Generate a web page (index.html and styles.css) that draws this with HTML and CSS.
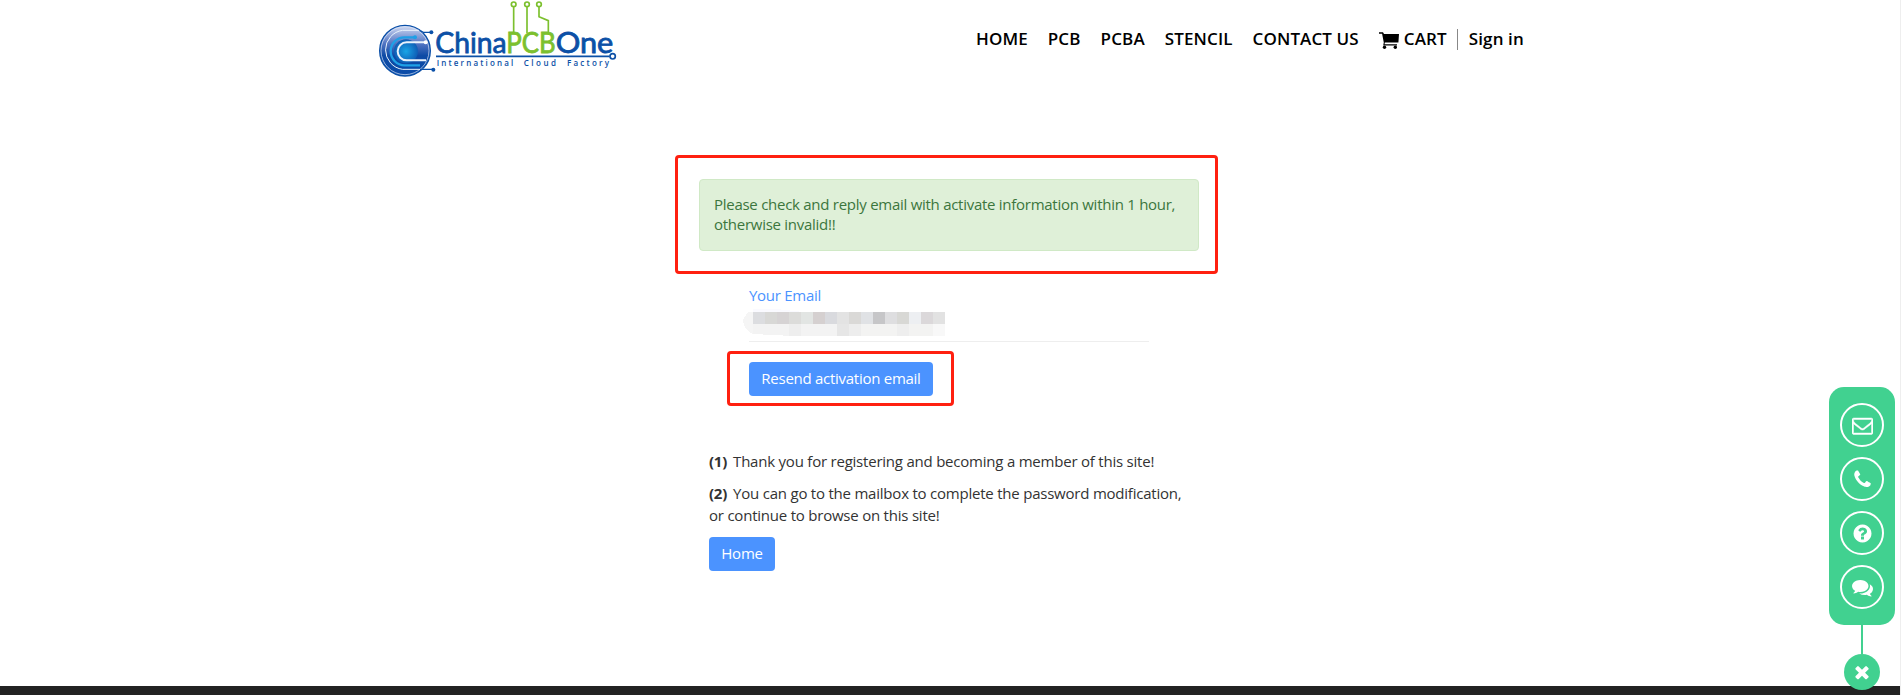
FILE: index.html
```html
<!DOCTYPE html>
<html lang="en">
<head>
<meta charset="utf-8">
<title>ChinaPCBOne</title>
<link rel="stylesheet" href="styles.css">
</head>
<body>
<div class="page">
  <header class="header">
    <svg class="logo" viewBox="0 0 780 255" role="img" aria-label="ChinaPCBOne">
      <defs>
        <radialGradient id="core"><stop offset="0" stop-color="#19a5e6"/><stop offset="1" stop-color="#0e5db5"/></radialGradient>
        <linearGradient id="ball" x1="0" y1="0" x2="0" y2="1"><stop offset="0" stop-color="#d3dcf3"/><stop offset=".35" stop-color="#5577c4"/><stop offset=".6" stop-color="#0d4aa5"/><stop offset="1" stop-color="#0a4ba8"/></linearGradient>
      </defs>
      <circle cx="105" cy="152" r="76" fill="url(#ball)" stroke="#0b50a8" stroke-width="4"/>
      <circle cx="105" cy="152" r="72" fill="none" stroke="#dce6f7" stroke-width="2"/>
      <circle cx="108" cy="154" r="36" fill="url(#core)"/>
      <path d="M133 112H104a41 41 0 0 0 0 84H150" fill="none" stroke="#1fa0e6" stroke-width="7"/>
      <path d="M165 127H110a27 27 0 0 0 0 54H168" fill="none" stroke="#e8f2fc" stroke-width="6"/>
      <path d="M186 97H160L146 91H98A59 59 0 0 0 98 208H188" fill="none" stroke="#e8f2fc" stroke-width="3"/>
      <path d="M186 97H160L148 91M150 208H188" fill="none" stroke="#0b50a8" stroke-width="4"/>
      <circle cx="135" cy="112" r="6" fill="#1fa0e6"/><circle cx="167" cy="127" r="6" fill="#fff"/>
      <circle cx="184" cy="97" r="6" fill="#0b50a8"/><circle cx="190" cy="209" r="6" fill="#0b50a8"/>
      <g fill="none" stroke="#7cc02e" stroke-width="5">
        <path d="M431 20V100M471 20V100M507 20V50L535 62V100"/>
        <circle cx="431" cy="13" r="7"/><circle cx="471" cy="13" r="7"/><circle cx="507" cy="13" r="7"/>
      </g>
      <g class="logo-name">
        <text class="blue" x="196" y="158" textLength="214" lengthAdjust="spacingAndGlyphs">China</text>
        <text class="green" x="409" y="158" textLength="148" lengthAdjust="spacingAndGlyphs">PCB</text>
        <text class="blue" x="557" y="158" textLength="173" lengthAdjust="spacingAndGlyphs">One</text>
      </g>
      <path d="M198 169H719" stroke="#0c50a6" stroke-width="5"/>
      <circle cx="728" cy="169" r="8" fill="#fff" stroke="#0c50a6" stroke-width="5"/>
      <g class="logo-tag">
        <text x="200" y="198" textLength="230">International</text>
        <text x="461" y="198" textLength="97">Cloud</text>
        <text x="591" y="198" textLength="126">Factory</text>
      </g>
    </svg>
    <nav class="nav">
      <a>HOME</a><a>PCB</a><a>PCBA</a><a>STENCIL</a><a>CONTACT US</a>
      <a class="cart"><svg class="cart-icon" viewBox="0 0 20 17"><path d="M0 .3H4L5 2H20L19.4 10.4H5.8L5.6 12.3H18V13.5H4.2L4.8 10.6L3.1 1.7H0Z"/><circle cx="5.5" cy="15.2" r="1.7"/><circle cx="16.3" cy="15.2" r="1.7"/></svg>CART</a>
      <a class="signin">Sign in</a>
    </nav>
  </header>

  <main class="content">
    <section class="notice-frame">
      <div class="notice">Please check and reply email with activate information within 1 hour,<br>otherwise invalid!!</div>
    </section>
    <section class="form">
      <label class="label">Your Email</label>
      <div class="field">
        <svg class="masked" viewBox="0 0 203 27" shape-rendering="crispEdges">
          <path d="M10 3H6Q1 7 0 12Q1 21 10 25Z" fill="#f5f5f5"/>
          <path d="M10 0H34L60 3H10Z" fill="#fafaff"/>
          <g><rect x="10" y="3" width="12" height="12" fill="#dcdde0"/><rect x="22" y="3" width="12" height="12" fill="#d8d8d6"/><rect x="34" y="3" width="12" height="12" fill="#d6d3d4"/><rect x="46" y="3" width="12" height="12" fill="#dcdcda"/><rect x="58" y="3" width="12" height="12" fill="#e2e5e3"/><rect x="70" y="3" width="12" height="12" fill="#d5d0d0"/><rect x="82" y="3" width="12" height="12" fill="#d9dade"/><rect x="94" y="3" width="12" height="12" fill="#e3e3e3"/><rect x="106" y="3" width="12" height="12" fill="#dad9d7"/><rect x="118" y="3" width="12" height="12" fill="#e0e2e5"/><rect x="130" y="3" width="12" height="12" fill="#c6c6c8"/><rect x="142" y="3" width="12" height="12" fill="#dedee0"/><rect x="154" y="3" width="12" height="12" fill="#d8d8d5"/><rect x="166" y="3" width="12" height="12" fill="#edeff2"/><rect x="178" y="3" width="12" height="12" fill="#dbd8da"/><rect x="190" y="3" width="12" height="12" fill="#e2e2e2"/></g>
          <g><path d="M10 15H94V27H50L10 25Z" fill="#f3f3f3"/><rect x="46" y="15" width="12" height="12" fill="#eeeeee"/><rect x="94" y="15" width="12" height="12" fill="#e6e6e6"/><rect x="106" y="15" width="12" height="12" fill="#ededed"/><rect x="118" y="15" width="72" height="12" fill="#f3f3f2"/><rect x="154" y="15" width="12" height="12" fill="#eeeeee"/><rect x="190" y="15" width="12" height="12" fill="#f8f8f8"/></g>
        </svg>
      </div>
      <div class="resend-frame"><button class="btn resend">Resend activation email</button></div>
    </section>
    <section class="info">
      <p class="one"><b>(1)</b><span>Thank you for registering and becoming a member of this site!</span></p>
      <p class="two"><b>(2)</b><span>You can go to the mailbox to complete the password modification,</span></p>
      <p class="three">or continue to browse on this site!</p>
      <button class="btn home">Home</button>
    </section>
  </main>
  <footer class="footer"></footer>

  <aside class="contact">
    <div class="panel">
      <a class="round"><svg viewBox="0 0 1792 1792"><path d="M1664 1504v-768q-32 36-69 66-268 206-426 338-51 43-83 67t-86.5 48.5-102.5 24.5h-2q-48 0-102.5-24.5t-86.5-48.5-83-67q-158-132-426-338-37-30-69-66v768q0 13 9.5 22.5t22.5 9.5h1472q13 0 22.5-9.5t9.5-22.5zm0-1051v-24.5l-.5-13-3-12.5-5.5-9-9-7.5-14-2.5h-1472q-13 0-22.5 9.5t-9.5 22.5q0 168 147 284 193 152 401 317 6 5 35 29.5t46 37.5 44.5 31.5 50.5 27.5 43 9h2q20 0 43-9t50.5-27.5 44.5-31.5 46-37.5 35-29.5q208-165 401-317 54-43 100.5-115.5t46.5-131.5zm128-37v1088q0 66-47 113t-113 47h-1472q-66 0-113-47t-47-113v-1088q0-66 47-113t113-47h1472q66 0 113 47t47 113z" stroke="#fff" stroke-width="40"/></svg></a>
      <a class="round"><svg viewBox="0 0 1792 1792"><path d="M1600 1240q0 27-10 70.5t-21 68.5q-21 50-122 106-94 51-186 51-27 0-53-3.5t-57.5-12.5-47-14.5-55.5-20.5-49-18q-98-35-175-83-127-79-264-216t-216-264q-48-77-83-175-3-9-18-49t-20.5-55.5-14.5-47-12.5-57.5-3.5-53q0-92 51-186 56-101 106-122 25-11 68.5-21t70.5-10q14 0 21 3 18 6 53 76 11 19 30 54t35 63.5 31 53.5q3 4 17.5 25t21.5 35.5 7 28.5q0 20-28.5 50t-62 55-62 53-28.5 46q0 9 5 22.5t8.5 20.5 14 24 11.5 19q76 137 174 235t235 174q2 1 19 11.5t24 14 20.5 8.5 22.5 5q18 0 46-28.5t53-62 55-62 50-28.5q14 0 28.5 7t35.5 21.5 25 17.5q25 15 53.5 31t63.5 35 54 30q70 35 76 53 3 7 3 21z"/></svg></a>
      <a class="round"><svg viewBox="0 0 1792 1792"><path d="M1024 1376v-192q0-14-9-23t-23-9h-192q-14 0-23 9t-9 23v192q0 14 9 23t23 9h192q14 0 23-9t9-23zm256-672q0-88-55.5-163t-138.5-116-170-41q-243 0-371 213-15 24 8 42l132 100q7 6 19 6 16 0 25-12 53-68 86-92 34-24 86-24 48 0 85.5 26t37.5 59q0 38-20 61t-68 45q-63 28-115.5 86.5t-52.5 125.5v36q0 14 9 23t23 9h192q14 0 23-9t9-23q0-19 21.5-49.5t54.5-49.5q32-18 49-28.5t46-35 44.5-48 28-60.5 12.5-81zm384 192q0 209-103 385.5t-279.5 279.5-385.5 103-385.5-103-279.5-279.5-103-385.5 103-385.5 279.5-279.5 385.5-103 385.5 103 279.5 279.5 103 385.5z"/></svg></a>
      <a class="round"><svg viewBox="0 0 1792 1792"><path d="M1408 768q0 139-94 257t-256.5 186.5-353.5 68.5q-86 0-176-16-124 88-278 128-36 9-86 16h-3q-11 0-20.5-8t-11.5-21q-1-3-1-6.5t.5-6.5 2-6l2.5-5 3.5-5.5 4-5 4.5-5 4-4.5q5-6 23-25t26-29.5 22.5-29 25-38.5 20.5-44q-124-72-195-177t-71-224q0-139 94-257t256.5-186.5 353.5-68.5 353.5 68.5 256.5 186.5 94 257zm384 256q0 120-71 224.5t-195 176.5q10 24 20.5 44t25 38.5 22.5 29 26 29.5 23 25q1 1 4 4.5t4.5 5 4 5 3.5 5.5l2.5 5 2 6 .5 6.5-1 6.5q-3 14-13 22t-22 7q-50-7-86-16-154-40-278-128-90 16-176 16-271 0-472-132 58 4 88 4 161 0 309-45t264-129q125-92 192-212t67-254q0-77-23-152 129 71 204 178t75 230z"/></svg></a>
    </div>
    <div class="stem"></div>
    <a class="close"><svg viewBox="0 0 1792 1792"><path d="M1490 1322q0 40-28 68l-136 136q-28 28-68 28t-68-28l-294-294-294 294q-28 28-68 28t-68-28l-136-136q-28-28-28-68t28-68l294-294-294-294q-28-28-28-68t28-68l136-136q28-28 68-28t68 28l294 294 294-294q28-28 68-28t68 28l136 136q28 28 28 68t-28 68l-294 294 294 294q28 28 28 68z"/></svg></a>
  </aside>
</div>
</body>
</html>
```
FILE: styles.css
```css
* { box-sizing: border-box; }
body { margin: 0; overflow: hidden; background: #fff; color: #333; font: 15px/22px "Open Sans", "Noto Sans", sans-serif; }
p { margin: 0; }
.page { height: 695px; display: flex; flex-direction: column; border-right: 1px solid #eee; }
.header { display: flex; height: 85px; padding-left: 370px; }
.logo { width: 260px; height: 85px; flex: none; }
.logo-name { font: 400 88px Lato, sans-serif; stroke-width: 2.5; }
.blue { fill: #0c50a6; stroke: #0c50a6; }
.green { fill: #7cc02e; stroke: #7cc02e; }
.logo-tag { font: 600 24px "Open Sans", sans-serif; fill: #0c50a6; }
.nav { display: flex; gap: 20px; margin-left: 346px; padding-top: 29px; height: 50px; white-space: nowrap; color: #000; font-size: 17px; font-weight: 600; line-height: 19px; letter-spacing: .12px; }
.cart { display: flex; }
.cart-icon { width: 20px; height: 17px; margin: 3px 5px 0 0; }
.signin { border-left: 1px solid #888; margin-left: -10px; padding-left: 11px; }
.content { width: 543px; margin-left: 675px; flex: 1; padding-top: 70px; white-space: nowrap; letter-spacing: -.27px; }
.notice-frame { height: 119px; border: 3px solid #ff2010; border-radius: 4px; padding: 21px 16px 0 21px; }
.notice { height: 72px; padding: 14px; background: #dff0d8; border: 1px solid #d0e9c6; border-radius: 4px; color: #3c763d; line-height: 20px; }
.form { width: 427px; padding: 9px 0 0 52px; }
.label { display: block; margin-left: 22px; line-height: 24px; color: #4b93ff; }
.field { height: 35px; margin-left: 22px; width: 400px; padding-top: 2px; border-bottom: 1px solid #eee; }
.masked { display: block; width: 203px; height: 27px; margin-left: -6px; }
.resend-frame { width: 227px; height: 55px; margin-top: 9px; padding: 8px 19px; border: 3px solid #ff2010; border-radius: 4px; }
.btn { display: block; height: 34px; padding: 0 0 3px; border: 0; border-radius: 4px; background: #4b93ff; color: #fff; font: inherit; letter-spacing: inherit; text-align: center; }
.resend { width: 184px; }
.home { width: 66px; margin-top: 11px; }
.info { padding: 44px 0 0 34px; letter-spacing: -.22px; }
.info b { margin-right: 6px; }
.one { margin-bottom: 10px; }
.footer { height: 9px; background: #222; }
.contact { position: absolute; right: 6px; top: 387px; display: flex; flex-direction: column; align-items: center; }
.panel { display: flex; flex-direction: column; align-items: center; gap: 10px; width: 66px; height: 238px; padding-top: 16px; border-radius: 15px; background: #41d190; }
.round { display: flex; align-items: center; justify-content: center; width: 44px; height: 44px; border: 2px solid #fff; border-radius: 50%; }
.round svg { width: 21px; height: 21px; fill: #fff; }
.stem { width: 2px; height: 29px; background: #41d190; }
.close { display: flex; align-items: center; justify-content: center; width: 36px; height: 36px; border-radius: 50%; background: #41d190; }
.close svg { width: 20px; height: 20px; fill: #fff; }
```
